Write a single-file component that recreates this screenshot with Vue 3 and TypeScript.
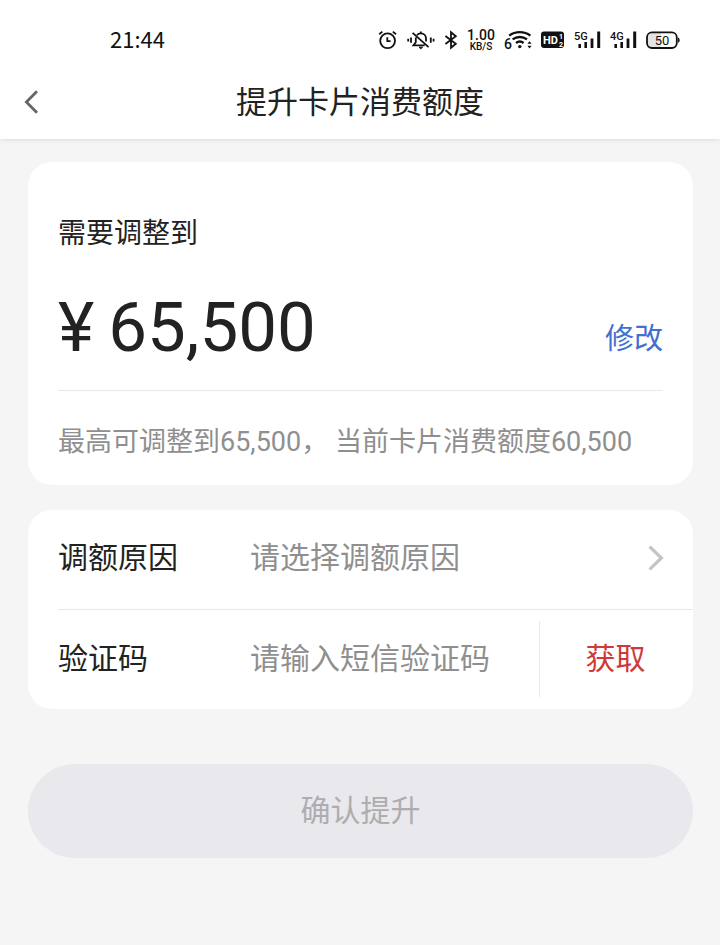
<script setup lang="ts">
import { ref, computed } from 'vue'

interface Signal {
  label: string
}

const signals: Signal[] = [{ label: '5G' }, { label: '4G' }]
const reasons: string[] = ['日常消费', '旅游出行', '大额购物']

const maxLimit = 65500
const currentLimit = 60500
const target = ref<number>(65500)
const reason = ref<string>('')
const code = ref<string>('')

const format = (value: number): string => value.toLocaleString('en-US')
const canSubmit = computed<boolean>(() => reason.value !== '' && code.value !== '')
</script>

<template>
  <div class="page">
    <header class="header">
      <div class="status">
        <time class="clock">21:44</time>
        <div class="indicators">
          <svg width="20" height="24" viewBox="0 0 20 24" class="line">
            <circle cx="9.6" cy="12.8" r="7.4" />
            <path d="M1.2 6.2 4.4 3.6M14.8 3.6 18 6.2M9.3 9.2V13.2H12.6" />
          </svg>
          <svg width="28" height="24" viewBox="0 0 28 24" class="line">
            <path d="M1.2 10.8V13.4M4 9.4V14.8M23.8 9.4V14.8M26.6 10.8V13.4" />
            <path d="M10 7.2C11 6 12.3 5.4 13.8 5.4C17 5.4 19 7.6 19 10.6V13.4M8.8 9.6V14.2L6.4 17.4H17.6M13.8 3.6V5.4M5.6 4.8 21.6 19.2" />
            <path d="M12 19.2H15.6L13.8 20.8Z" fill="#111" stroke-width="1" />
          </svg>
          <svg width="14" height="24" viewBox="0 0 14 24" class="line">
            <path d="M1.4 8 11.8 15.8 7 19.8V4.2L11.8 8.2 1.4 16" />
          </svg>
          <div class="speed"><span class="rate">1.00</span><span class="unit">KB/S</span></div>
          <svg width="28" height="24" viewBox="0 0 28 24">
            <text x="0" y="21" class="digit">6</text>
            <g class="arcs">
              <path d="M5.2 7.6C11.4 2.9 20.2 2.9 26.4 7.6" />
              <path d="M8.6 11.4C12.9 8.1 18.7 8.1 23 11.4" />
              <path d="M12 15C14.2 13.3 17.4 13.3 19.6 15" />
            </g>
            <circle cx="15.8" cy="18.6" r="1.7" />
            <path d="M23.4 15.8 25.5 13.2 27.6 15.8ZM23.4 17.8 25.5 20.4 27.6 17.8Z" />
          </svg>
          <svg width="24" height="24" viewBox="0 0 24 24">
            <rect x="0" y="3.6" width="23" height="16.4" rx="3" />
            <text x="2" y="16" class="hd">HD</text>
            <text x="18" y="11.2" class="sim">1</text>
            <text x="18" y="18.6" class="sim">2</text>
          </svg>
          <svg v-for="s in signals" :key="s.label" width="27" height="24" viewBox="0 0 27 24">
            <text x="0" y="12" class="net">{{ s.label }}</text>
            <path d="M4.4 16H7V20H4.4ZM10.4 14H13V20H10.4ZM16.6 10.4H19.4V20H16.6ZM23.2 3.6H26.2V20H23.2Z" />
          </svg>
          <svg width="34" height="24" viewBox="0 0 34 24">
            <path d="M6 5H15V19.4H6Q2 19.4 2 15V9Q2 5 6 5Z" fill="#e4e4e4" />
            <rect x="1" y="4.4" width="29.8" height="15.6" rx="5" fill="none" stroke="#111" stroke-width="1.8" />
            <path d="M32 9.6Q33.6 10 33.6 12.2 33.6 14.4 32 14.8Z" />
            <text x="16" y="16.8" text-anchor="middle" class="level">50</text>
          </svg>
        </div>
      </div>
      <nav class="nav">
        <button type="button" class="back" aria-label="返回">
          <svg width="16" height="26" viewBox="0 0 16 26">
            <path d="M14 1.2 3.4 12 14 22.8" fill="none" stroke="#666" stroke-width="2.8" />
          </svg>
        </button>
        <h1 class="title">提升卡片消费额度</h1>
      </nav>
    </header>

    <main class="content">
      <section class="card summary">
        <h2 class="caption">需要调整到</h2>
        <div class="amount-row">
          <strong class="amount"><span>¥</span><span>{{ format(target) }}</span></strong>
          <button type="button" class="edit">修改</button>
        </div>
        <p class="hint">最高可调整到{{ format(maxLimit) }}， 当前卡片消费额度{{ format(currentLimit) }}</p>
      </section>

      <section class="card form">
        <div class="row">
          <label class="label" for="reason">调额原因</label>
          <select id="reason" v-model="reason" class="field" :class="{ empty: !reason }">
            <option value="" disabled>请选择调额原因</option>
            <option v-for="r in reasons" :key="r" :value="r">{{ r }}</option>
          </select>
          <svg class="arrow" width="16" height="26" viewBox="0 0 16 26">
            <path d="M1.6 1.6 13.4 13 1.6 24.4" fill="none" stroke="#c4c4c4" stroke-width="3.2" />
          </svg>
        </div>
        <div class="row">
          <label class="label" for="code">验证码</label>
          <input id="code" v-model="code" class="field" type="text" placeholder="请输入短信验证码" />
          <button type="button" class="fetch">获取</button>
        </div>
      </section>

      <button type="button" class="submit" :disabled="!canSubmit">确认提升</button>
    </main>
  </div>
</template>

<style>
body {
  margin: 0;
  background: #f5f5f5;
}
</style>

<style scoped>
.page {
  min-height: 100vh;
  background: #f5f5f5;
  color: #222;
  font-family: Roboto, "Noto Sans CJK SC", sans-serif;
}

button,
input,
select {
  margin: 0;
  padding: 0;
  border: 0;
  background: none;
  color: inherit;
  font: inherit;
  appearance: none;
}

svg {
  display: block;
  flex: none;
}

.header {
  background: #fff;
  box-shadow: 0 1px 4px rgba(0, 0, 0, 0.1);
}

.status {
  display: flex;
  align-items: center;
  justify-content: space-between;
  height: 80px;
  padding: 0 40px 0 110px;
  box-sizing: border-box;
  color: #111;
}

.clock {
  padding-bottom: 4px;
  font-family: "Noto Sans CJK SC", sans-serif;
  font-size: 22px;
  line-height: 24px;
}

.indicators {
  display: flex;
  align-items: center;
  gap: 9px;
}

.indicators svg {
  fill: #111;
}

.indicators .line {
  fill: none;
  stroke: #111;
  stroke-width: 1.8;
}

.arcs path {
  fill: none;
  stroke: #111;
  stroke-width: 2.4;
}

.speed {
  display: flex;
  flex-direction: column;
  align-items: center;
  width: 28px;
  font-weight: 500;
}

.rate {
  font-size: 14px;
  line-height: 13px;
}

.unit {
  font-size: 10px;
  line-height: 10px;
}

.digit {
  font-size: 14px;
  font-weight: 500;
}

.hd {
  fill: #fff;
  font-size: 11px;
  font-weight: 700;
}

.sim {
  fill: #fff;
  font-size: 7px;
  font-weight: 700;
}

.net {
  font-size: 11px;
  font-weight: 500;
}

.level {
  font-size: 13px;
}

.nav {
  display: grid;
  grid-template-columns: 48px 1fr 48px;
  align-items: center;
  height: 59px;
  padding-bottom: 14px;
  box-sizing: border-box;
}

.back {
  display: flex;
  padding-left: 23px;
}

.title {
  margin: 0;
  font-size: 31px;
  line-height: 44px;
  font-weight: 400;
  text-align: center;
}

.content {
  display: flex;
  flex-direction: column;
  padding: 23px 27px 23px 28px;
}

.card {
  border-radius: 24px;
  background: #fff;
}

.summary {
  padding: 52px 30px 23px;
}

.caption {
  margin: 0;
  font-size: 28px;
  line-height: 40px;
  font-weight: 400;
}

.amount-row {
  display: flex;
  align-items: center;
  justify-content: space-between;
  margin-top: 32px;
  padding-bottom: 20px;
  border-bottom: 1px solid #e8e8e8;
}

.amount {
  display: flex;
  gap: 14px;
  font-size: 69px;
  line-height: 84px;
  font-weight: 400;
}

.edit {
  padding-top: 22px;
  color: #426fd0;
  font-size: 29px;
  line-height: 40px;
}

.hint {
  margin: 0;
  padding-top: 31px;
  color: #8f8f8f;
  font-size: 27px;
  line-height: 40px;
  white-space: nowrap;
}

.form {
  margin-top: 25px;
  padding-left: 30px;
}

.row {
  display: flex;
  align-items: center;
  height: 99px;
  padding-bottom: 4px;
  box-sizing: border-box;
  font-size: 30px;
  line-height: 44px;
}

.row + .row {
  height: 100px;
  padding-bottom: 2px;
  border-top: 1px solid #e8e8e8;
}

.label {
  flex: none;
  width: 192px;
}

.field {
  flex: 1;
  min-width: 0;
  height: 64px;
  outline: none;
}

.field.empty,
.field::placeholder {
  color: #8f8f8f;
  opacity: 1;
}

.arrow {
  margin-right: 29px;
}

.fetch {
  width: 154px;
  height: 76px;
  padding-right: 2px;
  border-left: 1px solid #e8e8e8;
  color: #cf3a38;
}

.submit {
  height: 94px;
  margin-top: 55px;
  border-radius: 47px;
  background: #e8e8ed;
  font-size: 30px;
  line-height: 44px;
}

.submit:disabled {
  color: #adadb0;
}
</style>
